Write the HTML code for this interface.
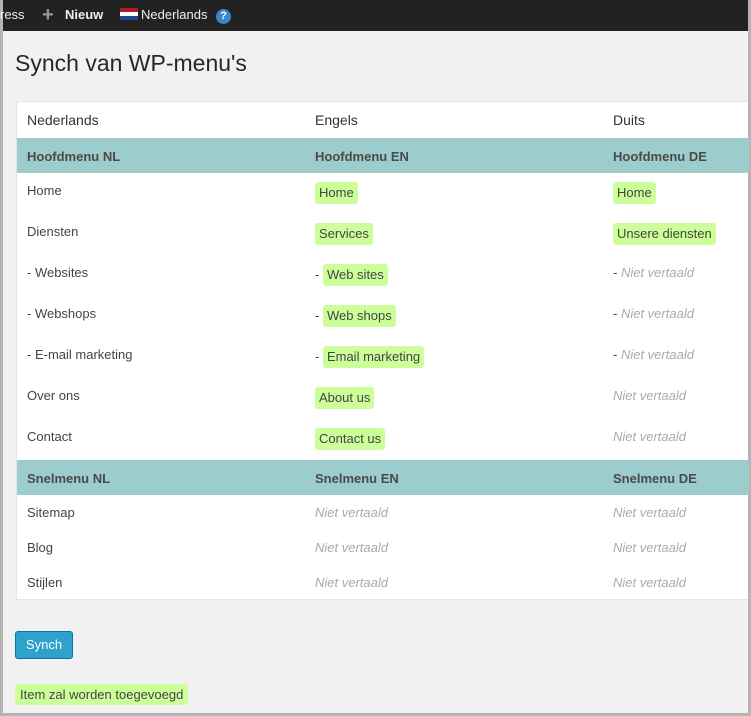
<!DOCTYPE html>
<html><head><style>
*{margin:0;padding:0;box-sizing:border-box}
body{width:751px;height:716px;overflow:hidden;background:#b4b4b4;font-family:"Liberation Sans",sans-serif;font-size:13px;color:#444;position:relative}
#wrap{position:absolute;left:3px;top:0;width:745px;height:713px;background:#f1f1f1}
#bar{position:absolute;left:0;top:0;width:745px;height:31px;background:#222;color:#eee;font-size:13px}
#bar span{position:absolute;top:7px}
h1{position:absolute;left:12px;top:50px;font-size:23px;font-weight:normal;color:#23282d}
#tbl{position:absolute;left:13px;top:101px;width:732px;height:499px;background:#fff;border:1px solid #e5e5e5;border-right:none}
.c{position:absolute;white-space:nowrap}
.sec{position:absolute;left:0;width:732px;height:35px;background:#9ccccc;font-weight:bold;color:#4a4a4a}
.b{display:inline-block;background:#ccff99;border-radius:3px;padding:4px 4px;line-height:14px;color:#444}
.n{font-style:italic;color:#aaa}
#btn{position:absolute;left:12px;top:631px;width:58px;height:28px;background:#2ea2cc;border:1px solid #0074a2;border-radius:3px;color:#fff;text-align:center;line-height:26px}
#msg{position:absolute;left:12px;top:684px;background:#ccff99;border-radius:3px;padding:3px 5px;color:#444}
</style></head><body>
<div id="wrap">
<div id="bar">
<span style="left:-3px">ress</span>
<span style="left:39px;top:4px;font-size:20px;color:#999;font-weight:bold">+</span>
<span style="left:62px;font-weight:bold">Nieuw</span>
<span style="left:117px;top:8px;width:18px;height:12px;background:linear-gradient(#ae1c28 0 33%,#fff 33% 66%,#21468b 66%)"></span>
<span style="left:138px">Nederlands</span>
<span style="left:213px;top:9px;width:15px;height:15px;border-radius:50%;background:#3a86c8;color:#fff;font-size:11px;font-weight:bold;text-align:center;line-height:15px">?</span>
</div>
<h1>Synch van WP-menu's</h1>
<div id="tbl">
<div class="c" style="left:10px;top:10px;font-size:14px;color:#333">Nederlands</div>
<div class="c" style="left:298px;top:10px;font-size:14px;color:#333">Engels</div>
<div class="c" style="left:596px;top:10px;font-size:14px;color:#333">Duits</div>
<div class="sec" style="top:36px"><span class="c" style="left:10px;top:11px">Hoofdmenu NL</span><span class="c" style="left:298px;top:11px">Hoofdmenu EN</span><span class="c" style="left:596px;top:11px">Hoofdmenu DE</span></div>
<div class="c" style="left:10px;top:81px">Home</div>
<div class="c" style="left:298px;top:80px"><span class="b">Home</span></div>
<div class="c" style="left:596px;top:80px"><span class="b">Home</span></div>
<div class="c" style="left:10px;top:122px">Diensten</div>
<div class="c" style="left:298px;top:121px"><span class="b">Services</span></div>
<div class="c" style="left:596px;top:121px"><span class="b">Unsere diensten</span></div>
<div class="c" style="left:10px;top:163px">- Websites</div>
<div class="c" style="left:298px;top:162px">- <span class="b">Web sites</span></div>
<div class="c" style="left:596px;top:163px">- <span class="n">Niet vertaald</span></div>
<div class="c" style="left:10px;top:204px">- Webshops</div>
<div class="c" style="left:298px;top:203px">- <span class="b">Web shops</span></div>
<div class="c" style="left:596px;top:204px">- <span class="n">Niet vertaald</span></div>
<div class="c" style="left:10px;top:245px">- E-mail marketing</div>
<div class="c" style="left:298px;top:244px">- <span class="b">Email marketing</span></div>
<div class="c" style="left:596px;top:245px">- <span class="n">Niet vertaald</span></div>
<div class="c" style="left:10px;top:286px">Over ons</div>
<div class="c" style="left:298px;top:285px"><span class="b">About us</span></div>
<div class="c n" style="left:596px;top:286px">Niet vertaald</div>
<div class="c" style="left:10px;top:327px">Contact</div>
<div class="c" style="left:298px;top:326px"><span class="b">Contact us</span></div>
<div class="c n" style="left:596px;top:327px">Niet vertaald</div>
<div class="sec" style="top:358px"><span class="c" style="left:10px;top:11px">Snelmenu NL</span><span class="c" style="left:298px;top:11px">Snelmenu EN</span><span class="c" style="left:596px;top:11px">Snelmenu DE</span></div>
<div class="c" style="left:10px;top:403px">Sitemap</div>
<div class="c n" style="left:298px;top:403px">Niet vertaald</div>
<div class="c n" style="left:596px;top:403px">Niet vertaald</div>
<div class="c" style="left:10px;top:438px">Blog</div>
<div class="c n" style="left:298px;top:438px">Niet vertaald</div>
<div class="c n" style="left:596px;top:438px">Niet vertaald</div>
<div class="c" style="left:10px;top:473px">Stijlen</div>
<div class="c n" style="left:298px;top:473px">Niet vertaald</div>
<div class="c n" style="left:596px;top:473px">Niet vertaald</div>
</div>
<div id="btn">Synch</div>
<div id="msg">Item zal worden toegevoegd</div>
</div>
</body></html>
